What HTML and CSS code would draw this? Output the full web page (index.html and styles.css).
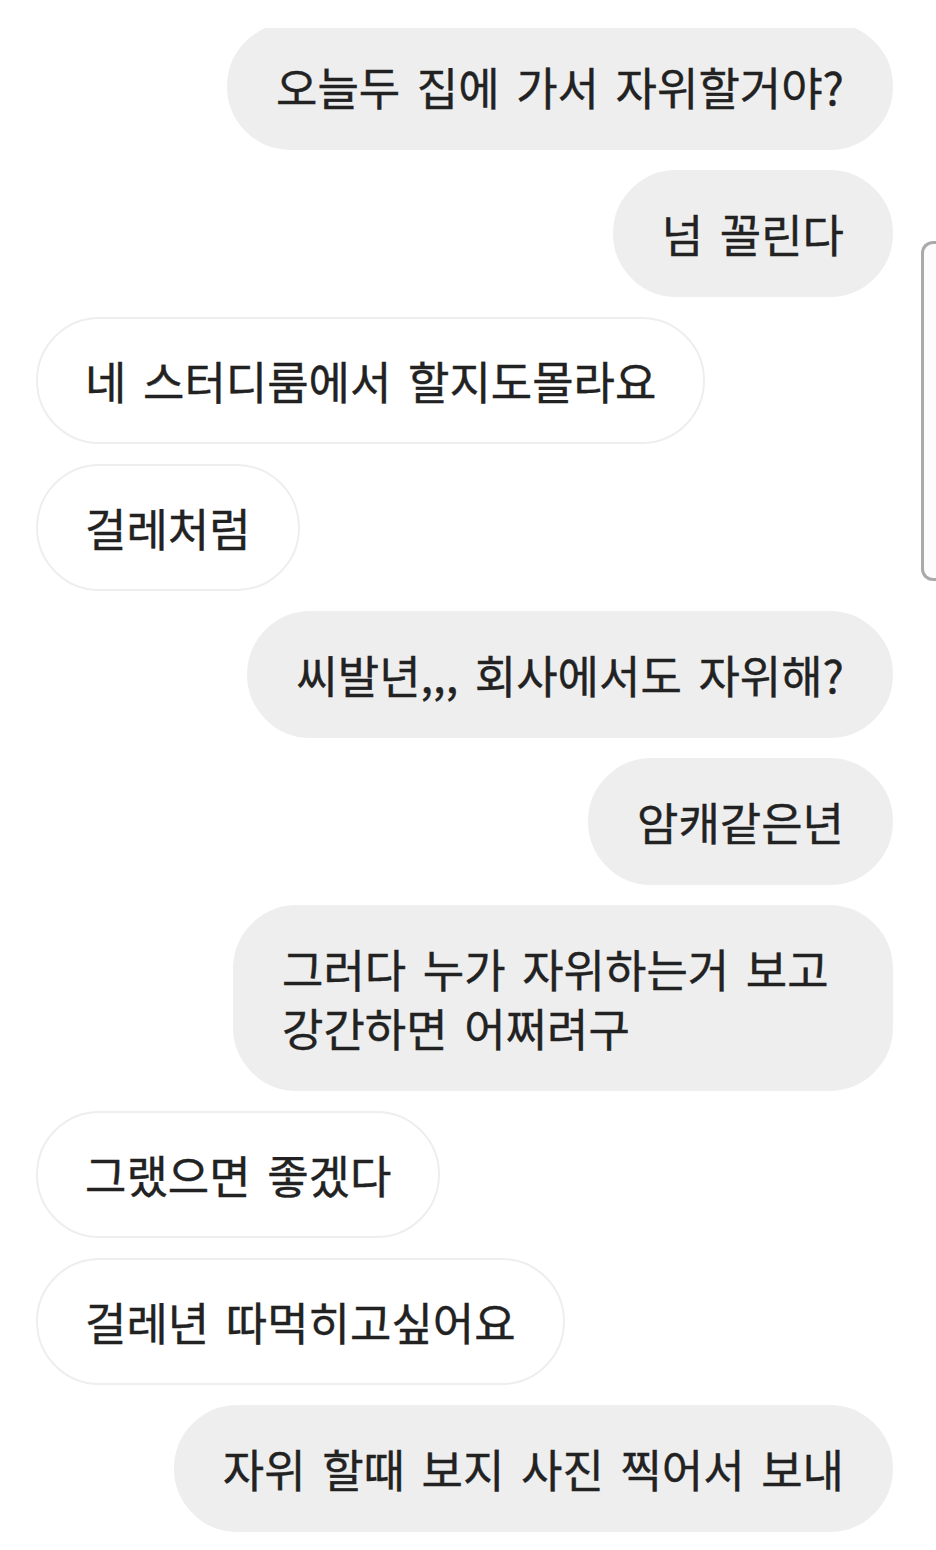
FILE: index.html
```html
<!DOCTYPE html>
<html lang="ko">

<head>
    <meta charset="UTF-8">
    <meta name="viewport" content="width=device-width, initial-scale=1.0">
    <title>대화</title>
    <link rel="stylesheet" href="styles.css">
</head>

<body>
    <div class="viewport">
        <div class="chat">
            <div class="bubble sent">오늘두 집에 가서 자위할거야?</div>
            <div class="bubble sent">넘 꼴린다</div>
            <div class="bubble recv">네 스터디룸에서 할지도몰라요</div>
            <div class="bubble recv">걸레처럼</div>
            <div class="bubble sent">씨발년,,, 회사에서도 자위해?</div>
            <div class="bubble sent">암캐같은년</div>
            <div class="bubble sent wide">그러다 누가 자위하는거 보고 강간하면 어쩌려구</div>
            <div class="bubble recv">그랬으면 좋겠다</div>
            <div class="bubble recv">걸레년 따먹히고싶어요</div>
            <div class="bubble sent">자위 할때 보지 사진 찍어서 보내</div>
        </div>
    </div>

    <!-- 오른쪽 스크롤 핸들 -->
    <div class="handle"></div>
</body>

</html>
```

FILE: styles.css
```css
body {
    margin: 0;
    background-color: #fff;
    font-family: "Noto Sans CJK KR", "Noto Sans", sans-serif;
    color: #222222;
}

.viewport {
    margin-top: 28px;
    height: 1522px;
    overflow: hidden;
}

.chat {
    display: flex;
    flex-direction: column;
    gap: 20px;
    margin-top: -5px;
    padding: 0 43px 0 36px;
}

.bubble {
    box-sizing: border-box;
    padding: 32px 47px;
    border: 2px solid #eeeeee;
    border-radius: 64px;
    font-size: 45px;
    font-weight: 400;
    line-height: 59px;
    word-spacing: 4px;
    word-break: keep-all;
    white-space: nowrap;
    -webkit-text-stroke: 0.4px #222222;
}

.sent {
    align-self: flex-end;
    background-color: #eeeeee;
}

.recv {
    align-self: flex-start;
    background-color: #fff;
}

.wide {
    width: 660px;
    white-space: normal;
}

.handle {
    position: absolute;
    top: 241px;
    left: 921px;
    width: 30px;
    height: 334px;
    border: 3px solid #aaaaaa;
    border-right: none;
    border-radius: 12px 0 0 12px;
    background-color: #fcfcfc;
}
```
